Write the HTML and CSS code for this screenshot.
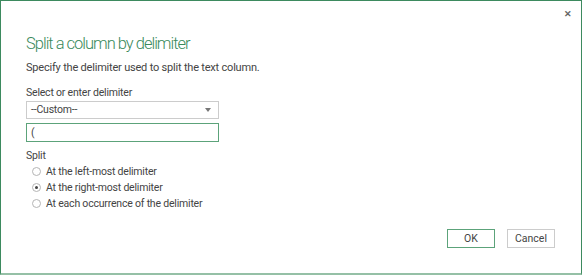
FILE: index.html
```html
<!DOCTYPE html>
<html lang="en">
<head>
    <meta charset="UTF-8">
    <title>Split Column by Delimiter</title>
    <link rel="stylesheet" href="styles.css">
</head>
<body>
    <div class="dialog">
        <button class="close-button" aria-label="Close">&#x2715;</button>
        <h1 class="dialog-title">Split a column by delimiter</h1>
        <p class="dialog-subtitle">Specify the delimiter used to split the text column.</p>

        <div class="field">
            <label class="field-label">Select or enter delimiter</label>
            <div class="select-box">
                <span>--Custom--</span>
                <span class="select-arrow"></span>
            </div>
            <div class="text-box">(</div>
        </div>

        <div class="field">
            <span class="field-label">Split</span>
            <ul class="radio-list">
                <li><span class="radio"></span>At the left-most delimiter</li>
                <li><span class="radio checked"></span>At the right-most delimiter</li>
                <li><span class="radio"></span>At each occurrence of the delimiter</li>
            </ul>
        </div>

        <div class="dialog-buttons">
            <button class="btn btn-primary">OK</button>
            <button class="btn">Cancel</button>
        </div>
    </div>
</body>
</html>
```

FILE: styles.css
```css
* {
    margin: 0;
    padding: 0;
    box-sizing: border-box;
}

body {
    font-family: Roboto, "Noto Sans", sans-serif;
    background: #ffffff;
    color: #444444;
    font-size: 10.5px;
    letter-spacing: -0.2px;
}

.dialog {
    position: relative;
    width: 582px;
    height: 275px;
    border: 1px solid #3d8a5f;
    border-bottom: 2px solid #95c0a6;
    padding: 30px 25px 0 25px;
    display: flex;
    flex-direction: column;
}

.close-button {
    position: absolute;
    top: 6px;
    right: 6px;
    width: 14px;
    height: 14px;
    border: none;
    background: none;
    color: #666666;
    font-size: 9px;
    font-weight: bold;
    cursor: pointer;
}

.dialog-title {
    font-weight: 300;
    font-size: 16.5px;
    letter-spacing: -1px;
    color: #3a8a5c;
    line-height: 26px;
}

.dialog-subtitle {
    font-size: 11px;
    letter-spacing: -0.2px;
    line-height: 16px;
    margin-top: 3px;
    color: #444444;
}

.field {
    margin-top: 9px;
    display: flex;
    flex-direction: column;
}

.field-label {
    line-height: 15px;
    margin-bottom: 1px;
}

.select-box,
.text-box {
    width: 193px;
    height: 18px;
    border: 1px solid #cccccc;
    padding: 0 4px;
    line-height: 16px;
    display: flex;
    align-items: center;
    justify-content: space-between;
}

.select-arrow {
    width: 0;
    height: 0;
    border-left: 3.5px solid transparent;
    border-right: 3.5px solid transparent;
    border-top: 4px solid #777777;
    margin-right: 3px;
}

.text-box {
    height: 19px;
    margin-top: 4px;
    border-color: #5ca37a;
}

.field + .field {
    margin-top: 6px;
}

.radio-list {
    list-style: none;
    padding-left: 6px;
    margin-top: -1px;
}

.radio-list li {
    display: flex;
    align-items: center;
    height: 16px;
}

.radio {
    width: 9px;
    height: 9px;
    border: 1px solid #b5b5b5;
    border-radius: 50%;
    margin-right: 5px;
    display: flex;
    align-items: center;
    justify-content: center;
}

.radio.checked::after {
    content: "";
    width: 3px;
    height: 3px;
    border-radius: 50%;
    background: #444444;
}

.dialog-buttons {
    margin-top: auto;
    margin-bottom: 25px;
    padding-right: 1px;
    display: flex;
    justify-content: flex-end;
    gap: 12px;
}

.btn {
    width: 48px;
    height: 19px;
    border: 1px solid #cccccc;
    background: #ffffff;
    font-family: inherit;
    font-size: 10.5px;
    color: #444444;
}

.btn-primary {
    border-color: #5ca37a;
}
```
